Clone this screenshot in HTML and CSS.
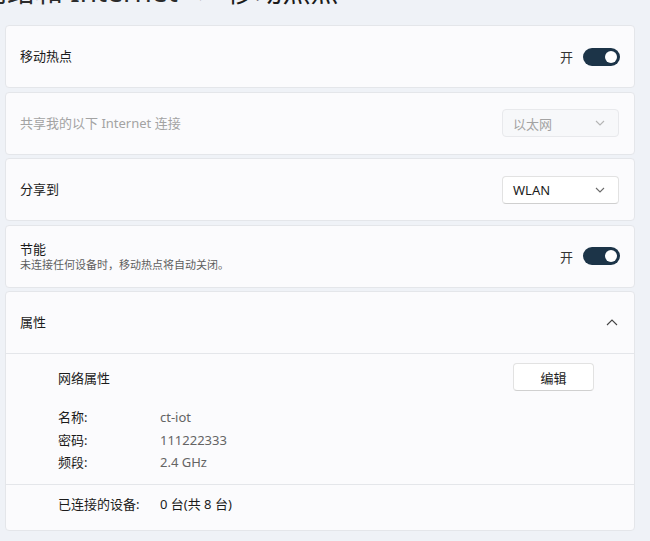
FILE: index.html
```html
<!DOCTYPE html>
<html>
<head>
  <title>移动热点</title>
  <link rel="stylesheet" href="styles.css">
</head>
<body>
  <div class="page">
    <h1 class="pageTitle">
      <span class="crumb">网络和 Internet</span>
      <span class="crumbSep">›</span>
      <span>移动热点</span>
    </h1>

    <div class="cardList">
      <div class="card">
        <div class="cardText">移动热点</div>
        <div class="toggleWrap">
          <span>开</span>
          <span class="toggle"><span class="knob"></span></span>
        </div>
      </div>

      <div class="card disabled">
        <div class="cardText">共享我的以下 Internet 连接</div>
        <div class="dropdown">
          <span>以太网</span>
          <svg width="10" height="6" viewBox="0 0 10 6"><path d="M1 1l4 4 4-4" fill="none" stroke="currentColor" stroke-width="1.1"/></svg>
        </div>
      </div>

      <div class="card">
        <div class="cardText">分享到</div>
        <div class="dropdown">
          <span>WLAN</span>
          <svg width="10" height="6" viewBox="0 0 10 6"><path d="M1 1l4 4 4-4" fill="none" stroke="currentColor" stroke-width="1.1"/></svg>
        </div>
      </div>

      <div class="card">
        <div class="cardText">
          <div>节能</div>
          <div class="cardSub">未连接任何设备时，移动热点将自动关闭。</div>
        </div>
        <div class="toggleWrap">
          <span>开</span>
          <span class="toggle"><span class="knob"></span></span>
        </div>
      </div>

      <div class="expander">
        <div class="expanderHead">
          <div class="cardText">属性</div>
          <svg width="12" height="7" viewBox="0 0 12 7"><path d="M1 6l5-5 5 5" fill="none" stroke="#444" stroke-width="1.1"/></svg>
        </div>
        <div class="expanderBody">
          <div class="propHead">
            <span>网络属性</span>
            <button class="editButton">编辑</button>
          </div>
          <div class="propGrid">
            <span>名称:</span><span class="propValue">ct-iot</span>
            <span>密码:</span><span class="propValue">111222333</span>
            <span>频段:</span><span class="propValue">2.4 GHz</span>
          </div>
        </div>
        <div class="expanderFoot">
          <div class="propGrid">
            <span>已连接的设备:</span><span>0 台(共 8 台)</span>
          </div>
        </div>
      </div>
    </div>
  </div>
</body>
</html>
```

FILE: styles.css
```css
body {
  margin: 0;
  overflow: hidden;
  background-color: #eff2f7;
  font-family: "Noto Sans", "Noto Sans CJK SC", sans-serif;
  font-size: 13px;
  color: #1b1b1b;
}

.page {
  padding: 0 15px 0 5px;
}

/* page is scrolled, only the bottom of the breadcrumb shows */
.pageTitle {
  display: flex;
  align-items: center;
  gap: 20px;
  margin: -23px 0 20px -26px;
  height: 28px;
  font-size: 28px;
  line-height: 28px;
  font-weight: 400;
  white-space: nowrap;
}

.crumb {
  color: #2b2b2b;
}

.crumbSep {
  color: #777;
}

.cardList {
  display: flex;
  flex-direction: column;
  gap: 3.5px;
}

.card {
  display: flex;
  align-items: center;
  justify-content: space-between;
  height: 63px;
  box-sizing: border-box;
  padding: 0 14px 0 14px;
  background-color: #fbfbfd;
  border: 1px solid #e4e6ea;
  border-radius: 4px;
}

.cardText {
  line-height: 17px;
}

.cardSub {
  font-size: 11px;
  line-height: 14px;
  color: #5e5e5e;
}

.card.disabled .cardText {
  color: #a3a3a3;
}

.toggleWrap {
  display: flex;
  align-items: center;
  gap: 10px;
  color: #333;
}

.toggle {
  display: flex;
  align-items: center;
  justify-content: flex-end;
  width: 37px;
  height: 18px;
  box-sizing: border-box;
  padding-right: 3px;
  border-radius: 9px;
  background-color: #1c3448;
}

.knob {
  width: 12px;
  height: 12px;
  border-radius: 50%;
  background-color: #fff;
}

.dropdown {
  display: flex;
  align-items: center;
  justify-content: space-between;
  width: 117px;
  height: 28px;
  box-sizing: border-box;
  margin-right: 1px;
  padding: 0 13px 0 10px;
  background-color: #fff;
  border: 1px solid #e2e2e2;
  border-bottom-color: #cfcfcf;
  border-radius: 4px;
  color: #6b6b6b;
}

.dropdown span {
  color: #1b1b1b;
}

.card.disabled .dropdown {
  background-color: #f7f8fa;
  border-color: #e8e9ec;
  color: #b5b5b5;
}

.card.disabled .dropdown span {
  color: #a3a3a3;
}

.expander {
  background-color: #fbfbfd;
  border: 1px solid #e4e6ea;
  border-radius: 4px;
}

.expanderHead {
  display: flex;
  align-items: center;
  justify-content: space-between;
  height: 61px;
  padding: 0 16px 0 14px;
  border-bottom: 1px solid #e4e6ea;
}

.expanderBody {
  padding: 9px 40px 10px 52px;
  border-bottom: 1px solid #e4e6ea;
}

.propHead {
  display: flex;
  align-items: center;
  justify-content: space-between;
  margin-bottom: 15px;
}

.editButton {
  width: 81px;
  height: 28px;
  background-color: #fff;
  border: 1px solid #e2e2e2;
  border-bottom-color: #d0d0d0;
  border-radius: 4px;
  font-family: inherit;
  font-size: 13px;
  color: #1b1b1b;
}

.propGrid {
  display: grid;
  grid-template-columns: 102px 1fr;
  line-height: 22.5px;
}

.propValue {
  color: #646464;
}

.expanderFoot {
  padding: 8px 40px 15px 52px;
}
```
